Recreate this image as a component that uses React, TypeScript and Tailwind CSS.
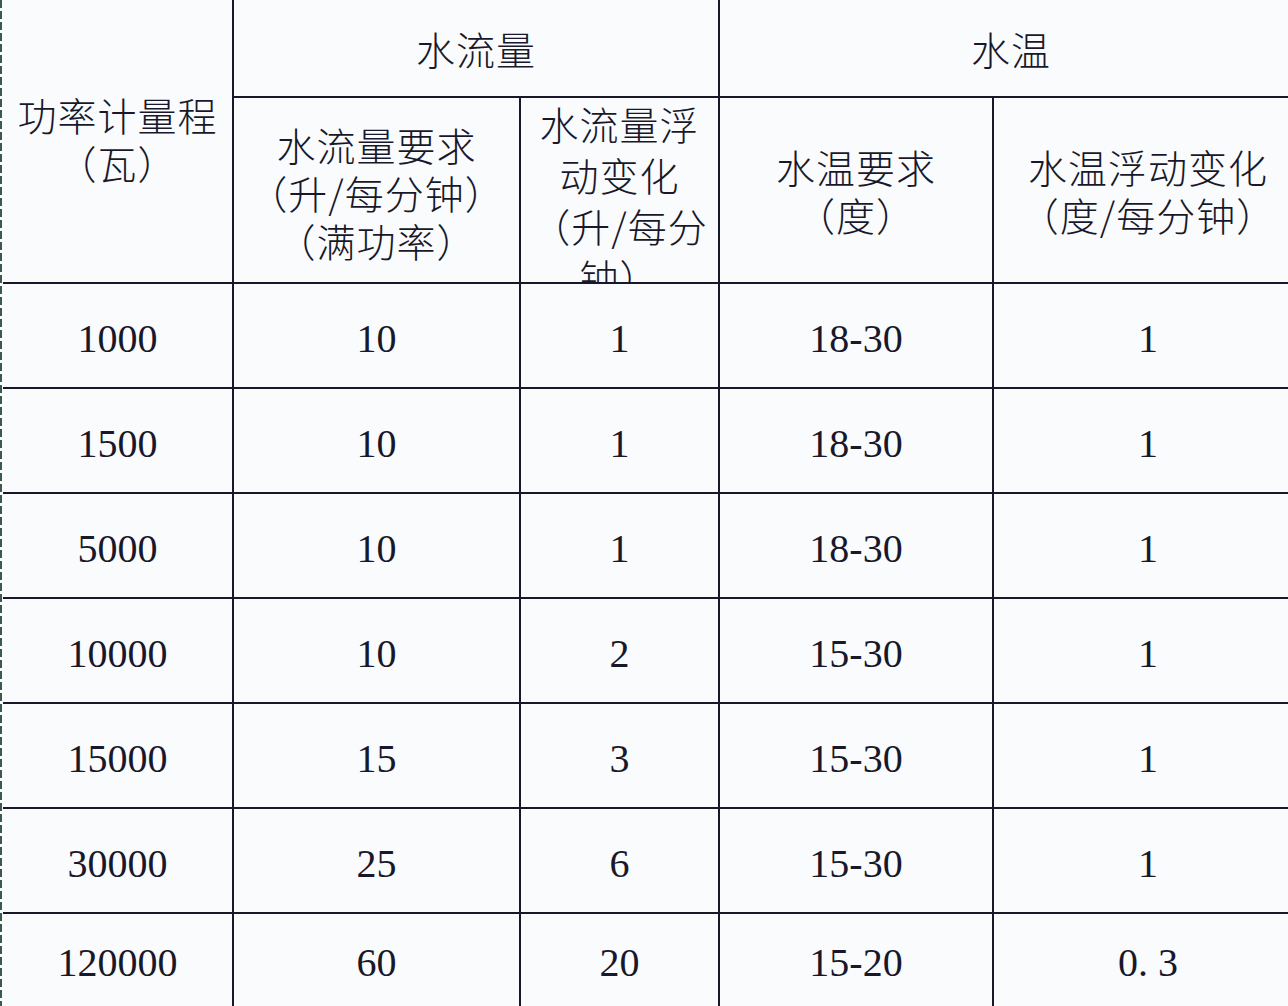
import React from "react";

const cjk = "font-['Noto_Sans_CJK_SC','Noto_Sans',sans-serif]";
const num = "font-['Liberation_Serif','Noto_Sans_CJK_SC',serif]";

const rows: string[][] = [
  ["1000", "10", "1", "18-30", "1"],
  ["1500", "10", "1", "18-30", "1"],
  ["5000", "10", "1", "18-30", "1"],
  ["10000", "10", "2", "15-30", "1"],
  ["15000", "15", "3", "15-30", "1"],
  ["30000", "25", "6", "15-30", "1"],
  ["120000", "60", "20", "15-20", "0. 3"],
];

export default function App() {
  return (
    <div className="flex w-[1288px] h-[1006px] overflow-hidden bg-[#fafbfd] text-[#18182a]">
      <div className="w-[3px] shrink-0 flex justify-start">
        <div className="w-[2px] h-full bg-[repeating-linear-gradient(to_bottom,#3c5a4c_0px,#3c5a4c_8px,transparent_8px,transparent_11px)]" />
      </div>
      <div
        className={`grid flex-1 grid-cols-[229px_287px_199px_274px_1fr] grid-rows-[96px_186px_repeat(6,105px)_94px] border-[#18182a] ${cjk} font-light text-[39px] leading-[48px] tracking-[1px] [text-spacing-trim:space-all]`}
      >
        <div className="row-span-2 flex flex-col items-center justify-center text-center pb-[6px]">
          <span>功率计量程</span>
          <span>（瓦）</span>
        </div>
        <div className="col-span-2 border-l-2 border-[#18182a] flex items-center justify-center">
          水流量
        </div>
        <div className="col-span-2 border-l-2 border-[#18182a] flex items-center justify-center pl-[14px]">
          水温
        </div>

        <div className="border-l-2 border-t-2 border-[#18182a] flex flex-col items-center justify-center text-center pt-[4px]">
          <span>水流量要求</span>
          <span>（升/每分钟）</span>
          <span>（满功率）</span>
        </div>
        <div className="border-l-2 border-t-2 border-[#18182a] flex flex-col items-center justify-start text-center overflow-hidden pt-[0px] leading-[51px]">
          <span>水流量浮</span>
          <span>动变化</span>
          <span>（升/每分</span>
          <span>钟）</span>
        </div>
        <div className="border-l-2 border-t-2 border-[#18182a] flex flex-col items-center justify-center text-center">
          <span>水温要求</span>
          <span>（度）</span>
        </div>
        <div className="border-l-2 border-t-2 border-[#18182a] flex flex-col items-center justify-center text-center pl-[14px]">
          <span>水温浮动变化</span>
          <span>（度/每分钟）</span>
        </div>

        {rows.map((r, i) =>
          r.map((v, j) => (
            <div
              key={`${i}-${j}`}
              className={`border-t-2 border-[#18182a] flex items-center justify-center pt-[6px] ${num} font-normal text-[40px] tracking-normal ${j > 0 ? "border-l-2" : ""} ${j === 4 ? "pl-[14px]" : ""}`}
            >
              {v}
            </div>
          ))
        )}
      </div>
    </div>
  );
}
